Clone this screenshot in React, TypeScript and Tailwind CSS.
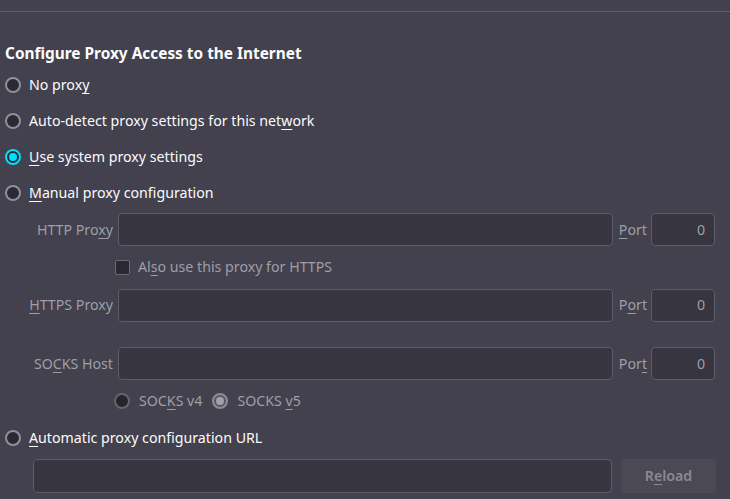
import React from 'react';

// Firefox "Connection Settings" dialog, dark theme, manual proxy fields disabled

const font = { fontFamily: '"Noto Sans", "Open Sans", sans-serif' };

function Radio({ checked = false, disabled = false }: { checked?: boolean; disabled?: boolean }) {
  if (checked) {
    return (
      <span
        className={`flex h-[16px] w-[16px] shrink-0 items-center justify-center rounded-full border-2 ${
          disabled ? 'border-[#8e8d95] bg-[#5a5962]' : 'border-[#00ddff] bg-[#2b2a33]'
        }`}
      >
        <span className={`h-[8px] w-[8px] rounded-full ${disabled ? 'bg-[#a3a2aa]' : 'bg-[#00ddff]'}`} />
      </span>
    );
  }
  return (
    <span
      className={`h-[16px] w-[16px] shrink-0 rounded-full border-2 ${
        disabled ? 'border-[#66656e] bg-[#26252c]' : 'border-[#8f8f9d] bg-[#2b2a33]'
      }`}
    />
  );
}

function RadioRow({ checked, children }: { checked?: boolean; children: React.ReactNode }) {
  return (
    <div className="flex h-[36px] items-center gap-[8px] pl-[5px] text-[14.2px] text-[#fbfbfe]">
      <Radio checked={checked} />
      <span>{children}</span>
    </div>
  );
}

function ProxyRow({ label, port, className = '' }: { label: React.ReactNode; port: React.ReactNode; className?: string }) {
  return (
    <div className={`flex items-center pl-[29px] pr-[15px] text-[14.2px] text-[#9f9ea6] ${className}`}>
      <span className="w-[84px] shrink-0 text-right whitespace-nowrap">{label}</span>
      <div className="ml-[5px] h-[33px] flex-1 rounded-[4px] border border-[#5d5c67] bg-[#363540]" />
      <span className="ml-[6px] whitespace-nowrap">{port}</span>
      <div className="ml-[4px] flex h-[33px] w-[64px] items-center justify-end rounded-[4px] border border-[#5d5c67] bg-[#363540] pr-[9px]">
        0
      </div>
    </div>
  );
}

const U = ({ children }: { children: React.ReactNode }) => (
  <u className="underline decoration-1 underline-offset-[3px]">{children}</u>
);

export default function App() {
  return (
    <div className="h-[499px] w-[730px] overflow-hidden bg-[#42414d] antialiased" style={font}>
      <div className="h-[11px]" />
      <div className="h-px bg-[#5f5e69]" />

      <h1 className="mt-[31px] flex h-[22px] items-center pl-[5px] text-[15.4px] font-bold text-[#fbfbfe]">
        Configure Proxy Access to the Internet
      </h1>

      <div className="mt-[2px]">
        <RadioRow>
          No prox<U>y</U>
        </RadioRow>
        <RadioRow>
          Auto-detect proxy settings for this net<U>w</U>ork
        </RadioRow>
        <RadioRow checked>
          <U>U</U>se system proxy settings
        </RadioRow>
        <RadioRow>
          <U>M</U>anual proxy configuration
        </RadioRow>
      </div>

      <ProxyRow
        className="mt-[2px]"
        label={
          <>
            HTTP Pro<U>x</U>y
          </>
        }
        port={
          <>
            <U>P</U>ort
          </>
        }
      />

      <div className="flex h-[42px] items-center gap-[8px] pl-[115px] text-[14.2px] text-[#9f9ea6]">
        <span className="h-[15px] w-[15px] rounded-[2px] border border-[#6b6a73] bg-[#2a2930]" />
        <span>
          Al<U>s</U>o use this proxy for HTTPS
        </span>
      </div>

      <ProxyRow
        className="h-[34px]"
        label={
          <>
            <U>H</U>TTPS Proxy
          </>
        }
        port={
          <>
            P<U>o</U>rt
          </>
        }
      />

      <ProxyRow
        className="mt-[25px]"
        label={
          <>
            SO<U>C</U>KS Host
          </>
        }
        port={
          <>
            Por<U>t</U>
          </>
        }
      />

      <div className="mt-[5px] flex h-[32px] items-center pl-[114px] text-[14.2px] text-[#9f9ea6]">
        <Radio disabled />
        <span className="ml-[9px]">
          SOC<U>K</U>S v4
        </span>
        <span className="ml-[10px]">
          <Radio checked disabled />
        </span>
        <span className="ml-[9px]">
          SOCKS <U>v</U>5
        </span>
      </div>

      <div className="mt-[3px]">
        <RadioRow>
          <U>A</U>utomatic proxy configuration URL
        </RadioRow>
      </div>

      <div className="mt-[3px] flex items-center pl-[33px] pr-[14px]">
        <div className="h-[34px] flex-1 rounded-[4px] border border-[#5d5c67] bg-[#363540]" />
        <button className="ml-[9px] h-[34px] w-[95px] rounded-[4px] bg-[#4a4954] text-[14.2px] font-semibold text-[#8b8a93]">
          R<U>e</U>load
        </button>
      </div>
    </div>
  );
}
